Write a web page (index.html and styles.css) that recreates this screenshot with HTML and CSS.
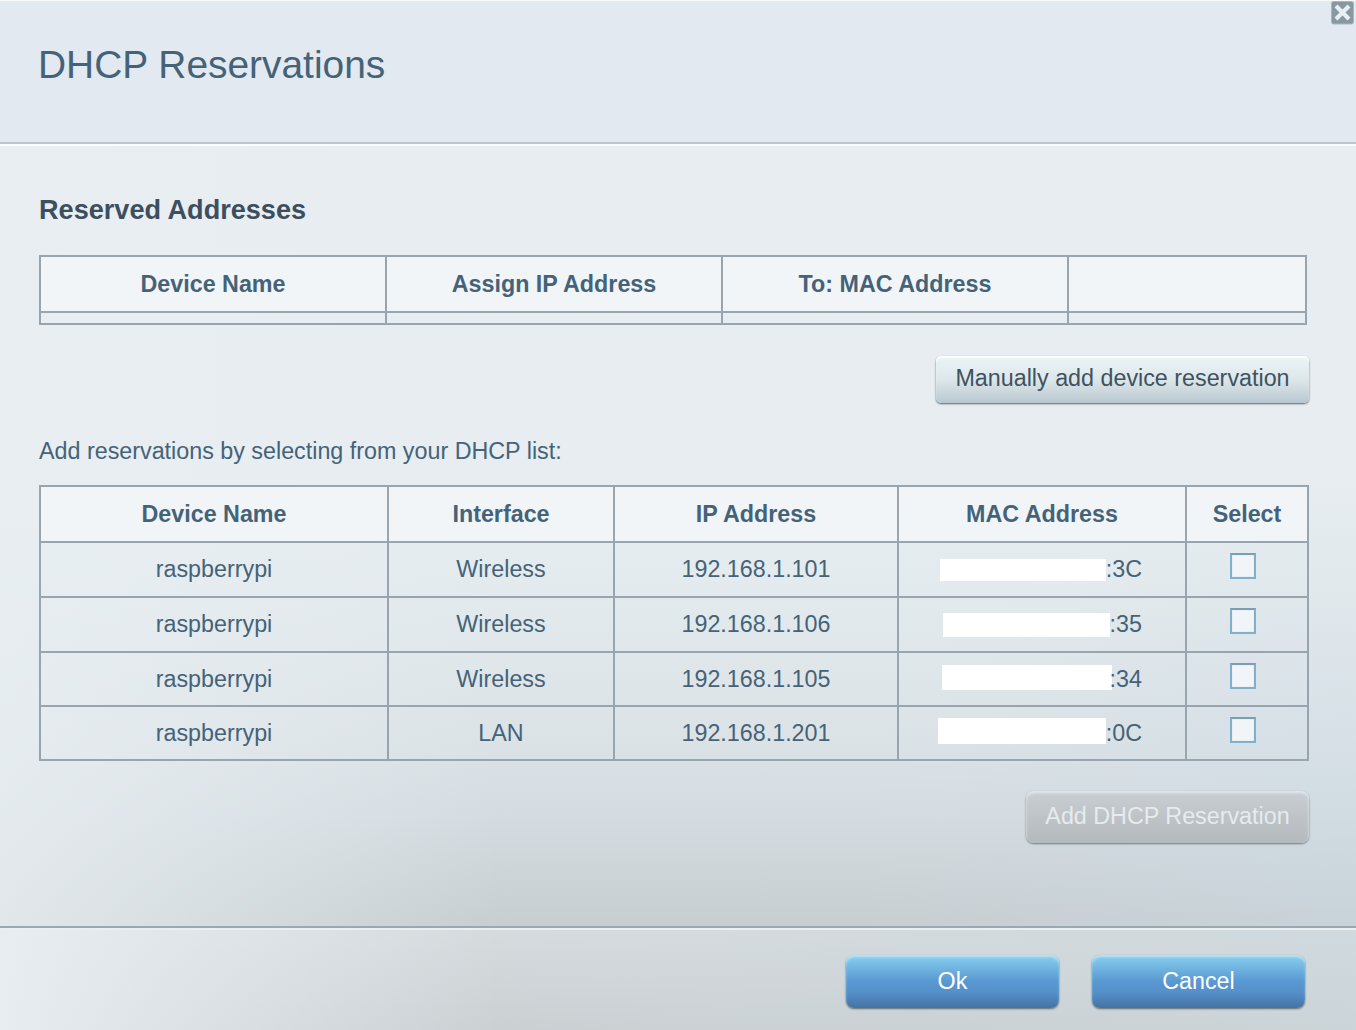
FILE: index.html
```html
<!DOCTYPE html>
<html lang="en">
<head>
<meta charset="utf-8">
<title>DHCP Reservations</title>
<link rel="stylesheet" href="styles.css">
</head>
<body>
<div class="dialog">
  <header class="dialog-header">
    <h1>DHCP Reservations</h1>
    <button class="close" aria-label="Close">
      <svg width="24" height="24" viewBox="0 0 24 24"><rect x="0.5" y="0.5" width="22" height="22.5" rx="2" fill="#8798a1" stroke="#a9b7c0"/><path d="M5 5 L18 18 M18 5 L5 18" stroke="#e9eff3" stroke-width="4.2"/></svg>
    </button>
  </header>
  <main class="dialog-body">
    <h2>Reserved Addresses</h2>
    <table class="grid reserved">
      <colgroup><col class="r-name"><col class="r-ip"><col class="r-mac"><col class="r-action"></colgroup>
      <thead><tr><th>Device Name</th><th>Assign IP Address</th><th>To: MAC Address</th><th></th></tr></thead>
      <tbody><tr><td></td><td></td><td></td><td></td></tr></tbody>
    </table>
    <button class="btn btn-light">Manually add device reservation</button>
    <p class="hint">Add reservations by selecting from your DHCP list:</p>
    <table class="grid clients">
      <colgroup><col class="c-name"><col class="c-interface"><col class="c-ip"><col class="c-mac"><col class="c-select"></colgroup>
      <thead><tr><th>Device Name</th><th>Interface</th><th>IP Address</th><th>MAC Address</th><th>Select</th></tr></thead>
      <tbody>
        <tr><td>raspberrypi</td><td>Wireless</td><td>192.168.1.101</td><td><div class="mac"><span class="mask mask-a"></span>:3C</div></td><td><span class="check" role="checkbox" aria-checked="false"></span></td></tr>
        <tr><td>raspberrypi</td><td>Wireless</td><td>192.168.1.106</td><td><div class="mac"><span class="mask mask-b"></span>:35</div></td><td><span class="check" role="checkbox" aria-checked="false"></span></td></tr>
        <tr class="short"><td>raspberrypi</td><td>Wireless</td><td>192.168.1.105</td><td><div class="mac"><span class="mask mask-c"></span>:34</div></td><td><span class="check" role="checkbox" aria-checked="false"></span></td></tr>
        <tr class="short"><td>raspberrypi</td><td>LAN</td><td>192.168.1.201</td><td><div class="mac"><span class="mask mask-d"></span>:0C</div></td><td><span class="check" role="checkbox" aria-checked="false"></span></td></tr>
      </tbody>
    </table>
    <button class="btn btn-disabled" disabled>Add DHCP Reservation</button>
  </main>
  <footer class="dialog-footer">
    <button class="btn btn-primary">Ok</button>
    <button class="btn btn-primary">Cancel</button>
  </footer>
</div>
</body>
</html>
```
FILE: styles.css
```css
* { box-sizing: border-box; }
body {
  margin: 0;
  font: 23.3px/28px "Liberation Sans", Arial, sans-serif;
  color: #456378;
}
.dialog {
  width: 1356px;
  height: 1030px;
  overflow: hidden;
  display: flex;
  flex-direction: column;
}
.dialog-header {
  position: relative;
  height: 146px;
  padding: 42px 38px 0;
  background: #e2e9f0;
  border-top: 1px solid #f7f9fb;
  border-bottom: 2px solid #fafcfd;
  box-shadow: inset 0 -2px #bdc6cc;
}
h1 {
  margin: 0;
  font-size: 38.9px;
  line-height: 44px;
  font-weight: 400;
}
.close {
  position: absolute;
  top: 0;
  right: 1px;
  width: 24px;
  height: 24px;
  padding: 0;
  border: 0;
  background: none;
}
.close svg { display: block; }
.dialog-body {
  height: 780px;
  padding: 48px 47px 0 39px;
  display: flex;
  flex-direction: column;
  background:
    linear-gradient(to right, rgba(232,238,242,.78), rgba(232,238,242,.55) 150px, rgba(232,238,242,0) 500px),
    radial-gradient(ellipse 500px 380px at 1356px 720px, rgba(201,217,228,.4), rgba(201,217,228,0)),
    linear-gradient(#e8edf1 0, #e8edf1 300px, #e4ebee 430px, #dce3e7 590px, #d5dce1 670px, #c7ced1 780px);
}
h2 {
  margin: 0 0 29px;
  font-size: 27.1px;
  line-height: 32px;
  color: #3d4f5f;
}
.grid {
  table-layout: fixed;
  border-collapse: separate;
  border-spacing: 0;
  border: solid #98a5ae;
  border-width: 0 2px 2px 0;
  text-align: center;
}
.grid th, .grid td {
  padding: 0;
  border: solid #98a5ae;
  border-width: 2px 0 0 2px;
}
.grid th { height: 56px; background: #f1f5f8; }
.reserved { width: 1268px; }
.reserved td { height: 12px; }
.r-name, .r-mac { width: 346px; }
.r-ip { width: 336px; }
.clients { width: 1270px; }
.clients td { height: 55px; padding-bottom: 1px; }
.clients .short td { height: 54px; padding-bottom: 0; }
.c-name { width: 348px; }
.c-interface { width: 226px; }
.c-ip { width: 284px; }
.c-mac { width: 288px; }
.btn {
  padding: 0;
  border: 0;
  font: inherit;
  text-align: center;
}
.btn-light {
  align-self: flex-end;
  width: 373px;
  height: 47px;
  margin-top: 31px;
  padding-bottom: 3px;
  border-radius: 5px;
  color: #3f5262;
  background: linear-gradient(#ecf4f5, #dde7ea 50%, #b9c8d0);
  box-shadow: inset 0 2px 1px #fafdfd, 0 1px 2px #59636b;
}
.hint { margin: 34px 0 20px; }
.mac {
  display: flex;
  justify-content: flex-end;
  align-items: center;
  height: 28px;
  padding-right: 43px;
}
.mask { background: #fff; }
.mask-a { width: 166px; height: 22px; margin: 1px 0 0; }
.mask-b { width: 167px; height: 24px; margin: 1px 0 0; }
.mask-c { width: 170px; height: 25px; margin: -3px -2px 0 0; }
.mask-d { width: 168px; height: 26px; margin: -4px 0 0; }
.check {
  display: block;
  width: 26px;
  height: 26px;
  margin: -7px auto 0 43px;
  border: 2px solid #80b1cc;
  border-top-color: #7c9eb2;
  background: #f2f5f7;
  box-shadow: inset 0 0 1px #9bb7c7;
}
.btn-disabled {
  align-self: flex-end;
  width: 283px;
  height: 52px;
  margin-top: 30px;
  padding-bottom: 2px;
  border-radius: 8px;
  color: #e6ebee;
  background: linear-gradient(#c9ced2, #b3b9bd);
  box-shadow: inset 0 2px 3px #e4e9ec, 0 1px 2px #72797e;
}
.dialog-footer {
  flex: 1;
  display: flex;
  justify-content: flex-end;
  align-items: flex-start;
  gap: 33px;
  padding: 26px 51px 0 0;
  border-top: 2px solid #9ba8b0;
  box-shadow: inset 0 2px #eaeff1;
  background:
    linear-gradient(to right, rgba(232,238,242,.95), rgba(232,238,242,.65) 150px, rgba(232,238,242,0) 500px),
    linear-gradient(to right, rgba(203,212,214,0) 500px, rgba(203,216,221,.5)),
    linear-gradient(#d6dbde, #cbd0d3);
}
.btn-primary {
  width: 213px;
  height: 53px;
  margin-top: 1px;
  padding-bottom: 1px;
  border-radius: 8px;
  color: #fff;
  background: linear-gradient(#7fc5e9 10%, #5998d2 50%, #5590c9 70%, #4473a3);
  box-shadow: inset 0 3px 3px -1px #c5e6f6, 0 1px 2px #5c6970;
}
```
